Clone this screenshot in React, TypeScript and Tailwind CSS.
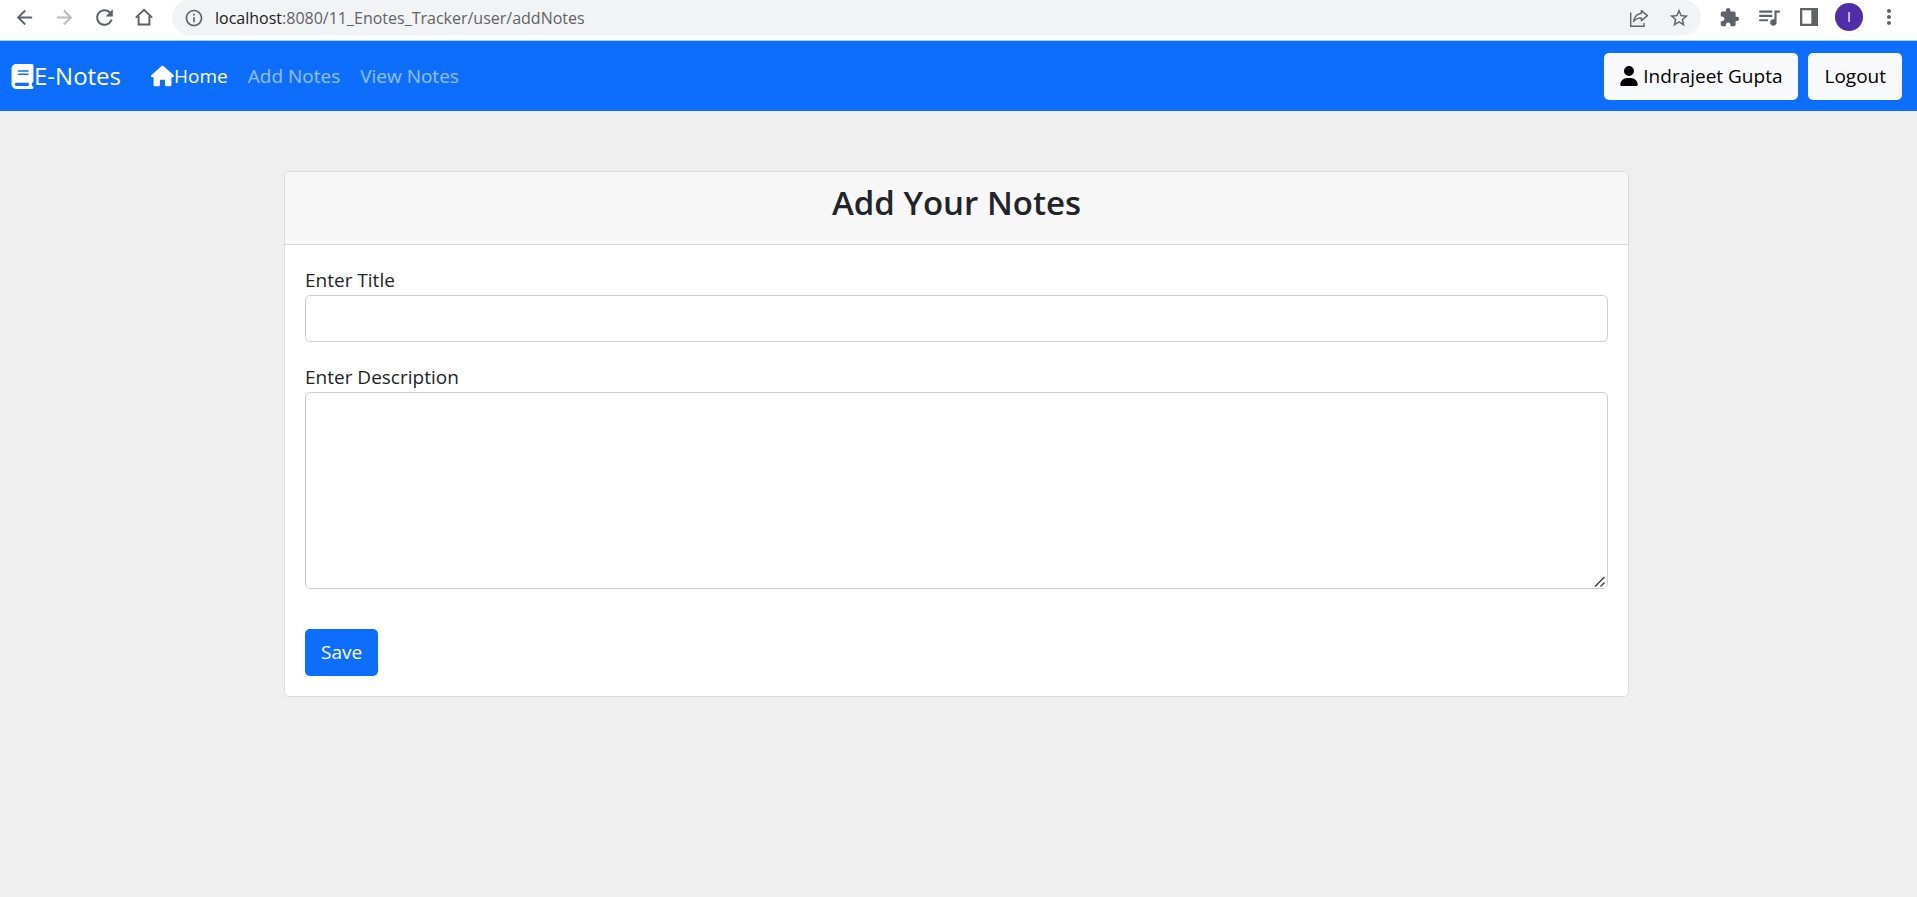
import React from "react";
import { FaBook, FaHouse, FaUser } from "react-icons/fa6";
import {
  MdArrowBack,
  MdArrowForward,
  MdExtension,
  MdInfoOutline,
  MdMoreVert,
  MdQueueMusic,
  MdRefresh,
  MdStarBorder,
} from "react-icons/md";

function HomeOutline() {
  return (
    <svg width="20" height="20" viewBox="0 0 20 20" fill="none" stroke="currentColor" strokeWidth="2">
      <path d="M1.8 10.6 10 2.8l8.2 7.8M4.6 9v8.6h10.8V9" strokeLinejoin="miter" />
    </svg>
  );
}

function ShareArrow() {
  return (
    <svg width="20" height="20" viewBox="0 0 20 20" fill="none" stroke="currentColor" strokeWidth="1.4">
      <path d="M1.7 4.500v13.800h13.400v-3.400" />
      <path d="M12.4 2.6l6 5-6 5V9.900c-3.600 0-5.900 1.100-7.600 3.500.5-4.500 3.200-7.600 7.600-8.200z" strokeLinejoin="round" />
    </svg>
  );
}

function SidePanel() {
  return (
    <svg width="18" height="18" viewBox="0 0 18 18" fill="currentColor">
      <path fillRule="evenodd" d="M0 0h18v18H0zM2.300 2.300v13.400h9V2.300z" />
    </svg>
  );
}

function ResizeGrip() {
  return (
    <svg
      width="12"
      height="12"
      viewBox="0 0 12 12"
      fill="none"
      stroke="#4a4a4a"
      strokeWidth="1.6"
      className="pointer-events-none absolute right-[2px] bottom-[1px] bg-white"
    >
      <path d="M1 10.500 10.500 1M6.500 10.500l4-4" />
    </svg>
  );
}

function ToolButton({ label, muted, children }: { label: string; muted?: boolean; children: React.ReactNode }) {
  return (
    <button
      type="button"
      aria-label={label}
      className={
        muted
          ? "flex size-7 items-center justify-center text-[#b9bbbe]"
          : "flex size-7 items-center justify-center text-[#5f6368]"
      }
    >
      {children}
    </button>
  );
}

function BrowserBar() {
  return (
    <div className="flex h-10 items-start bg-white pr-[14px] pl-[10px]">
      <div className="flex h-[34px] items-center gap-3">
        <ToolButton label="Back"><MdArrowBack size={23} /></ToolButton>
        <ToolButton label="Forward" muted><MdArrowForward size={23} /></ToolButton>
        <ToolButton label="Reload"><MdRefresh size={25} /></ToolButton>
        <ToolButton label="Home page"><HomeOutline /></ToolButton>
      </div>
      <div className="ml-[14px] flex h-[35px] grow items-center rounded-full bg-[#f1f3f4] pr-2 pl-3">
        <MdInfoOutline size={20} className="shrink-0 text-[#5f6368]" />
        <div className="ml-[11px] grow text-base text-[#5f6368]">
          <span className="text-[#202124]">localhost</span>:8080/11_Enotes_Tracker/user/addNotes
        </div>
        <div className="flex items-center gap-3">
          <ToolButton label="Share this page"><ShareArrow /></ToolButton>
          <ToolButton label="Bookmark this page"><MdStarBorder size={22} /></ToolButton>
        </div>
      </div>
      <div className="ml-[14px] flex h-[34px] items-center gap-3">
        <ToolButton label="Extensions"><MdExtension size={21} /></ToolButton>
        <ToolButton label="Media"><MdQueueMusic size={26} /></ToolButton>
        <ToolButton label="Side panel"><SidePanel /></ToolButton>
        <button
          type="button"
          aria-label="Profile"
          className="flex size-7 items-center justify-center rounded-full bg-[#512da8] text-sm text-white"
        >
          I
        </button>
        <ToolButton label="Menu"><MdMoreVert size={24} /></ToolButton>
      </div>
    </div>
  );
}

function Navbar() {
  return (
    <nav className="flex h-[71px] items-center border-t border-[#a9ccf5] bg-[#0d6efd] pr-[15px] pl-[11px] text-[19px]">
      <a href="#" className="flex items-center text-2xl text-white">
        <FaBook size={25} className="w-[23px]" />
        E-Notes
      </a>
      <a href="#" className="ml-[30px] flex items-center text-white">
        <FaHouse size={22} className="w-[23px]" />
        Home
      </a>
      <a href="#" className="ml-5 text-white/55">Add Notes</a>
      <a href="#" className="ml-5 text-white/55">View Notes</a>
      <div className="ml-auto flex gap-[10px] text-black">
        <button type="button" className="flex h-[47px] items-center gap-[5px] rounded-[5px] bg-[#f8f9fa] px-4">
          <FaUser size={20} className="w-[18px]" />
          Indrajeet Gupta
        </button>
        <button type="button" className="h-[47px] rounded-[5px] bg-[#f8f9fa] px-4">Logout</button>
      </div>
    </nav>
  );
}

export default function App() {
  return (
    <div className="flex min-h-screen flex-col bg-[#efefef] font-['Open_Sans','Noto_Sans',sans-serif] text-[#212529]">
      <BrowserBar />
      <Navbar />
      <main className="py-[60px] pr-1">
        <div className="mx-auto max-w-[1345px] overflow-hidden rounded-[5px] border border-[#dcdcdc] bg-white">
          <div className="border-b border-[#d8d8d8] bg-[#f7f7f7] px-5 pt-[10px] pb-5">
            <h1 className="text-center text-[33px] leading-[42px] font-semibold">Add Your Notes</h1>
          </div>
          <form className="flex flex-col items-start p-5 text-[19px]" onSubmit={(e) => e.preventDefault()}>
            <label htmlFor="title" className="leading-[30px]">Enter Title</label>
            <input
              id="title"
              type="text"
              className="h-[47px] w-full rounded-[5px] border border-[#ced0d2] bg-white px-4 outline-none"
            />
            <label htmlFor="description" className="mt-5 leading-[30px]">Enter Description</label>
            <div className="relative w-full">
              <textarea
                id="description"
                className="block h-[197px] w-full resize-y rounded-[5px] border border-[#ced0d2] bg-white px-4 py-2 outline-none"
              />
              <ResizeGrip />
            </div>
            <button type="submit" className="mt-10 h-[47px] rounded-[5px] bg-[#0d6efd] px-4 text-white">
              Save
            </button>
          </form>
        </div>
      </main>
    </div>
  );
}
